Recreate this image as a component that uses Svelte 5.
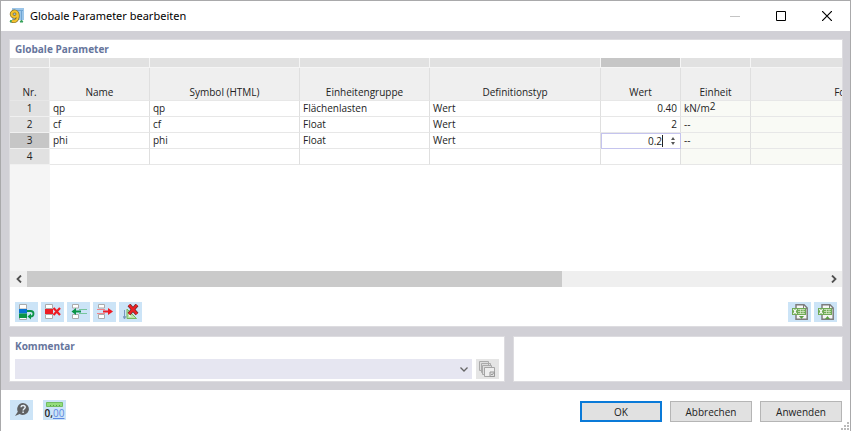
<script>
  const columns = [
    { label: 'Nr.', width: 40 },
    { label: 'Name', width: 100 },
    { label: 'Symbol (HTML)', width: 150 },
    { label: 'Einheitengruppe', width: 130 },
    { label: 'Definitionstyp', width: 171 },
    { label: 'Wert', width: 80, active: true },
    { label: 'Einheit', width: 70 },
    { label: 'Formel', width: 200 }
  ];

  const tableWidth = columns.reduce((sum, column) => sum + column.width, 0);

  const rows = [
    { nr: 1, name: 'qp', symbol: 'qp', group: 'Flächenlasten', type: 'Wert', value: '0.40', unit: 'kN/m', power: '2' },
    { nr: 2, name: 'cf', symbol: 'cf', group: 'Float', type: 'Wert', value: '2', unit: '--' },
    { nr: 3, name: 'phi', symbol: 'phi', group: 'Float', type: 'Wert', value: '0.2', unit: '--' },
    { nr: 4, name: '', symbol: '', group: '', type: '', value: '', unit: '' }
  ];

  let selectedRow = $state(3);
  let editValue = $state('0.2');

  function step(amount) {
    editValue = (parseFloat(editValue || '0') + amount).toFixed(1);
  }
</script>

<div class="window">
  <header class="titlebar">
    <svg class="app-icon" width="16" height="16" viewBox="0 0 16 16" aria-hidden="true">
      <path d="M3 0h12v12H3z" fill="#9cc6ea" />
      <path d="M4 2.500h10M12.500 3v9" stroke="#6fa5d3" fill="none" />
      <path d="M11 14l1.500-2 1.500 2zM1 14l1-2 1 2z" fill="#35a05a" stroke="#35a05a" />
      <path d="M8.500 6.500a3 2.700 0 1 1-.2-1.500c1 2.500.6 6-1.300 7.500-1.200.9-2.800.9-4 .2" fill="none" stroke="#7d6c2c" stroke-width="3.600" />
      <path d="M8.500 6.500a3 2.700 0 1 1-.2-1.500c1 2.500.6 6-1.300 7.500-1.200.9-2.800.9-4 .2" fill="none" stroke="#f4c22e" stroke-width="2.200" />
    </svg>
    <h1>Globale Parameter bearbeiten</h1>
    <div class="window-controls">
      <button type="button" aria-label="Minimieren" disabled>
        <svg width="10" height="10" viewBox="0 0 10 10"><path d="M0 5.500h10" stroke="#c4c4c4" /></svg>
      </button>
      <button type="button" aria-label="Maximieren">
        <svg width="10" height="10" viewBox="0 0 10 10"><path d="M.5.5h9v9h-9z" fill="none" stroke="#000" /></svg>
      </button>
      <button type="button" aria-label="Schließen">
        <svg width="10" height="10" viewBox="0 0 10 10"><path d="M0 0l10 10M10 0L0 10" stroke="#000" stroke-width="1.200" /></svg>
      </button>
    </div>
  </header>

  <main class="content">
    <section class="panel parameters">
      <h2>Globale Parameter</h2>

      <div class="grid">
        <table style:width="{tableWidth}px">
          <colgroup>
            {#each columns as column}
              <col style:width="{column.width}px" />
            {/each}
          </colgroup>
          <thead>
            <tr class="strip">
              {#each columns as column}
                <td class:active={column.active}></td>
              {/each}
            </tr>
            <tr class="labels">
              {#each columns as column}
                <th scope="col">{column.label}</th>
              {/each}
            </tr>
          </thead>
          <tbody>
            {#each rows as row (row.nr)}
              <tr class:selected={row.nr === selectedRow}>
                <th scope="row">{row.nr}</th>
                <td>{row.name}</td>
                <td>{row.symbol}</td>
                <td>{row.group}</td>
                <td>{row.type}</td>
                {#if row.nr === selectedRow}
                  <td class="editing">
                    <div class="editor">
                      <input type="text" aria-label="Wert" bind:value={editValue} />
                      <span class="caret"></span>
                      <span class="spinner">
                        <button type="button" aria-label="Erhöhen" onclick={() => step(0.1)}>
                          <svg width="4" height="3" viewBox="0 0 4 3"><path d="M0 3l2-3 2 3z" fill="#555" /></svg>
                        </button>
                        <button type="button" aria-label="Verringern" onclick={() => step(-0.1)}>
                          <svg width="4" height="3" viewBox="0 0 4 3"><path d="M0 0l2 3 2-3z" fill="#555" /></svg>
                        </button>
                      </span>
                    </div>
                  </td>
                {:else}
                  <td class="number">{row.value}</td>
                {/if}
                <td class="readonly">{row.unit}{#if row.power}<sup>{row.power}</sup>{/if}</td>
                <td class="readonly"></td>
              </tr>
            {/each}
          </tbody>
        </table>
        <div class="gutter"></div>
      </div>

      <div class="scrollbar">
        <button type="button" aria-label="Nach links">
          <svg width="6" height="8" viewBox="0 0 6 8"><path d="M5 .5L1.500 4 5 7.500" fill="none" stroke="#505050" stroke-width="1.800" /></svg>
        </button>
        <div class="track"><div class="thumb"></div></div>
        <button type="button" aria-label="Nach rechts">
          <svg width="6" height="8" viewBox="0 0 6 8"><path d="M1 .5L4.500 4 1 7.500" fill="none" stroke="#505050" stroke-width="1.800" /></svg>
        </button>
      </div>

      <div class="toolbar">
        <button class="tool" type="button" aria-label="Zeile kopieren">
          <svg width="16" height="16" viewBox="0 0 16 16">
            <path d="M.5.500h7V5h-7zM.5 11h7v4.500h-7z" fill="#fff" stroke="#aaa" />
            <path d="M0 5h8v4.500H0z" fill="#0873d2" />
            <path d="M0 9.500h8v4.500H0z" fill="#0c9447" />
            <path d="M8 7h3.500c4 0 4 5.500 0 5.500H10" fill="none" stroke="#0c9447" stroke-width="1.800" />
            <path d="M12 9.500v6l-3.500-3z" fill="#0c9447" />
          </svg>
        </button>
        <button class="tool" type="button" aria-label="Zeile löschen">
          <svg width="16" height="16" viewBox="0 0 16 16">
            <path d="M.5.500h7v4h-7zM.5 10.500h7v4h-7z" fill="#fff" stroke="#aaa" />
            <path d="M0 5h8v5H0z" fill="#ed1c24" />
            <path d="M8.500 4l6.500 7M15 4l-6.500 7" stroke="#ed1c24" stroke-width="2.200" />
          </svg>
        </button>
        <button class="tool" type="button" aria-label="Zeile einfügen">
          <svg width="16" height="16" viewBox="0 0 16 16">
            <path d="M1.500.500h6V4h-6zM1.500 10.500h6v4h-6z" fill="#fff" stroke="#aaa" />
            <path d="M8 5.500h8M8 9.500h8" stroke="#76c69d" />
            <path d="M2 7.500h8" stroke="#0c9447" stroke-width="2" />
            <path d="M5 4v7L.5 7.500z" fill="#0c9447" />
          </svg>
        </button>
        <button class="tool" type="button" aria-label="Zeile entfernen">
          <svg width="16" height="16" viewBox="0 0 16 16">
            <path d="M1.500.500h6V4h-6zM1.500 10.500h6v4h-6z" fill="#fff" stroke="#aaa" />
            <path d="M0 5.500h8M0 9.500h8" stroke="#f08388" />
            <path d="M6 7.500h8" stroke="#ed1c24" stroke-width="2" />
            <path d="M11 4v7l5-3.500z" fill="#ed1c24" />
          </svg>
        </button>
        <button class="tool" type="button" aria-label="Alle löschen">
          <svg width="16" height="16" viewBox="0 0 16 16">
            <path d="M1.500 6v8M0 12l1.500 3L3 12" fill="none" stroke="#7698bd" />
            <path d="M4 14.500V5l9.500 9.500z" fill="#b9e5a6" stroke="#75b65b" />
            <path d="M6 12.500v-2l2.500 2z" fill="#fff" />
            <path d="M6 1l8 9M14 1L6 10" stroke="#6d3030" stroke-width="3.800" />
            <path d="M6 1l8 9M14 1L6 10" stroke="#ed2024" stroke-width="2.400" />
          </svg>
        </button>
        <span class="spacer"></span>
        <button class="tool" type="button" aria-label="Excel-Export">
          <svg width="16" height="16" viewBox="0 0 16 16">
            <path d="M4 .8h8l3.200 3.200v11.200H4z" fill="#f6f6f6" stroke="#7d7d7d" stroke-width="1.500" />
            <path d="M11.500 1v3.500H15" fill="none" stroke="#7d7d7d" />
            <path d="M0 4h14v7H0z" fill="#6faa55" />
            <path d="M1.500 5l3 5M4.500 5l-3 5" stroke="#fff" stroke-width="1.200" />
            <path d="M6 5.500h7M6 7.500h7M6 9.500h7M8.500 5v5M11 5v5" stroke="#dceccf" stroke-width=".7" />
            <path d="M7 12h5l-2.500 3z" fill="#5b9d43" />
          </svg>
        </button>
        <button class="tool" type="button" aria-label="Excel-Import">
          <svg width="16" height="16" viewBox="0 0 16 16">
            <path d="M4 .8h8l3.200 3.200v11.200H4z" fill="#f6f6f6" stroke="#7d7d7d" stroke-width="1.500" />
            <path d="M11.500 1v3.500H15" fill="none" stroke="#7d7d7d" />
            <path d="M0 4h14v7H0z" fill="#6faa55" />
            <path d="M1.500 5l3 5M4.500 5l-3 5" stroke="#fff" stroke-width="1.200" />
            <path d="M6 5.500h7M6 7.500h7M6 9.500h7M8.500 5v5M11 5v5" stroke="#dceccf" stroke-width=".7" />
            <path d="M7 15h5l-2.500-3z" fill="#5b9d43" />
          </svg>
        </button>
      </div>
    </section>

    <div class="bottom">
      <section class="panel comment">
        <h2><label for="comment">Kommentar</label></h2>
        <div class="comment-row">
          <div class="select">
            <select id="comment"><option value=""></option></select>
            <svg width="8" height="5" viewBox="0 0 8 5" aria-hidden="true"><path d="M.5.500L4 4 7.500.500" fill="none" stroke="#666" stroke-width="1.300" /></svg>
          </div>
          <button class="tool disabled" type="button" aria-label="Kommentare" disabled>
            <svg width="16" height="16" viewBox="0 0 16 16">
              <path d="M.5.500h9v9h-9zM2.500 2.500h9v9h-9z" fill="#ddd" stroke="#aaa" />
              <path d="M3.500 4.500h9v9h-9z" fill="#ddd" stroke="#aaa" />
              <path d="M5.500 6.500h10v9h-10z" fill="#eee" stroke="#a5a5a5" />
              <path d="M11 11h4.500v4.500H11z" fill="#ddd" stroke="#999" />
              <path d="M12 13l1 1 2-2.500" fill="none" stroke="#999" />
            </svg>
          </button>
        </div>
      </section>
      <section class="panel preview"></section>
    </div>
  </main>

  <footer class="footer">
    <button class="tool" type="button" aria-label="Hilfe">
      <svg width="16" height="16" viewBox="0 0 16 16">
        <path d="M9 1a6 6 0 1 1-3.300 11.100L1 14l2.800-4.300A6 6 0 0 1 9 1z" fill="#5f6163" />
        <path d="M7 5.300c.2-2.300 4.200-2.200 4.200 0 0 1.500-2.100 1.500-2.100 3.300M9.100 9.600v1.500" fill="none" stroke="#e4eef6" stroke-width="1.500" />
      </svg>
    </button>
    <button class="tool decimals" type="button" aria-label="Einheiten und Dezimalstellen">
      <svg width="17" height="5" viewBox="0 0 17 5" aria-hidden="true">
        <path d="M.5.500h16v4H.5z" fill="#93dc7b" stroke="#72bd60" />
        <path d="M4.500 3v1M7.500 3v1M10.500 3v1M13.500 3v1" stroke="#559d49" />
      </svg>
      <span class="digits">0,<span class="fraction">00</span></span>
    </button>
    <div class="actions">
      <button class="primary" type="submit">OK</button>
      <button type="button">Abbrechen</button>
      <button type="button">Anwenden</button>
    </div>
    <svg class="grip" width="8" height="8" viewBox="0 0 8 8" aria-hidden="true">
      <path d="M6 0h2v2H6zM3 3h2v2H3zM6 3h2v2H6zM0 6h2v2H0zM3 6h2v2H3zM6 6h2v2H6z" fill="#bababa" />
    </svg>
  </footer>
</div>

<style>
  :global(body) {
    margin: 0;
  }

  .window {
    display: flex;
    flex-direction: column;
    box-sizing: border-box;
    min-height: 100vh;
    border: 1px solid #a9a9ab;
    border-width: 1px 1px 0 1px;
    background: #fff;
    color: #222;
    font: 10px/16px 'Open Sans', sans-serif;
  }

  button {
    padding: 0;
    border: 0;
    background: none;
    color: inherit;
    font: inherit;
  }

  svg {
    display: block;
  }

  .titlebar {
    display: flex;
    align-items: center;
    height: 30px;
    padding-left: 8px;
  }

  h1 {
    flex: 1;
    margin: 0 0 0 5px;
    color: #000;
    font: 400 11px/16px 'Noto Sans', sans-serif;
  }

  .window-controls {
    display: flex;
  }

  .window-controls button {
    display: grid;
    place-items: center;
    width: 46px;
    height: 28px;
  }

  .content {
    display: flex;
    flex: 1;
    flex-direction: column;
    gap: 9px;
    padding: 8px 7px 8px 8px;
    background: #d1d0d6;
  }

  .panel {
    border: 1px solid #dddce0;
    background: #fff;
  }

  h2 {
    margin: 0;
    padding: 1px 5px;
    color: #66759c;
    font-size: 10px;
    font-weight: 700;
  }

  .parameters {
    display: flex;
    flex: 1;
    flex-direction: column;
    min-width: 0;
  }

  .grid {
    display: flex;
    flex: 1;
    flex-direction: column;
    min-height: 180px;
    overflow: hidden;
  }

  .gutter {
    flex: 1;
    width: 40px;
    background: #f5f5f5;
  }

  table {
    table-layout: fixed;
    border-collapse: separate;
    border-spacing: 0;
  }

  th,
  td {
    box-sizing: border-box;
    height: 16px;
    padding: 0 3px;
    border-right: 1px solid #dfdfdf;
    border-bottom: 1px solid #e7e7e7;
    font-weight: 400;
    line-height: 14px;
    text-align: left;
    vertical-align: top;
    white-space: nowrap;
  }

  .strip td {
    height: 10px;
    border-right-color: #f5f5f5;
    border-bottom-color: #f5f5f5;
    background: #e1e1e1;
    line-height: 9px;
  }

  .strip td.active {
    background: #c6c6c6;
  }

  .labels th {
    height: 33px;
    padding-bottom: 1px;
    background: #efefef;
    text-align: center;
    vertical-align: bottom;
  }

  .labels th:first-child,
  tbody th {
    border-right-color: #eee;
    background: #e1e1e1;
    text-align: center;
  }

  tbody th {
    border-bottom-color: #f0f0f0;
  }

  .selected th {
    background: #c6c6c6;
  }

  .readonly {
    background: #f9faf5;
  }

  .number {
    text-align: right;
  }

  sup {
    font-size: 10px;
    line-height: 0;
    vertical-align: 2px;
  }

  .editing {
    padding: 0;
    border: 1px solid #c5c4ee;
  }

  .editor {
    display: flex;
    align-items: center;
    height: 14px;
  }

  .editor input {
    flex: 1;
    min-width: 0;
    height: 14px;
    padding: 0;
    border: 0;
    outline: 0;
    background: none;
    color: inherit;
    font: inherit;
    text-align: right;
  }

  .caret {
    width: 1px;
    height: 12px;
    background: #222;
  }

  .spinner {
    display: flex;
    flex-direction: column;
    gap: 2px;
    margin: 0 5px 0 8px;
  }

  .spinner button {
    height: 3px;
  }

  .scrollbar {
    display: flex;
    height: 16px;
    background: #efefef;
  }

  .scrollbar button {
    display: grid;
    place-items: center;
    width: 17px;
  }

  .track {
    flex: 1;
  }

  .thumb {
    width: 67%;
    height: 100%;
    background: #cacaca;
  }

  .toolbar {
    display: flex;
    gap: 3px;
    padding: 15px 5px 4px;
  }

  .spacer {
    flex: 1;
  }

  .tool {
    display: grid;
    place-items: center;
    width: 23px;
    height: 20px;
    background: #cce4f7;
  }

  .tool.disabled {
    background: #e5e5e5;
  }

  .bottom {
    display: grid;
    grid-template-columns: 3fr 2fr;
    gap: 8px;
  }

  .comment-row {
    display: flex;
    gap: 4px;
    padding: 4px 5px 2px;
  }

  .select {
    position: relative;
    flex: 1;
  }

  .select select {
    display: block;
    width: 100%;
    height: 20px;
    border: 0;
    border-radius: 0;
    appearance: none;
    background: #e6e6f1;
    font: inherit;
  }

  .select svg {
    position: absolute;
    top: 8px;
    right: 4px;
    pointer-events: none;
  }

  .footer {
    position: relative;
    display: flex;
    gap: 10px;
    height: 31px;
    padding: 10px 8px 0 9px;
  }

  .decimals {
    display: flex;
    flex-direction: column;
    align-items: center;
    justify-content: center;
    gap: 1px;
  }

  .digits {
    font-size: 10px;
    font-weight: 600;
    line-height: 11px;
  }

  .fraction {
    color: #5d87e0;
    font-weight: 400;
    text-decoration: underline;
  }

  .actions {
    display: flex;
    gap: 8px;
    margin: 1px 0 0 auto;
  }

  .actions button {
    width: 82px;
    height: 21px;
    border: 1px solid #b5b5b5;
    background: #e1e1e1;
  }

  .actions .primary {
    border: 2px solid #0a7ad8;
  }

  .grip {
    position: absolute;
    right: 1px;
    bottom: 1px;
  }
</style>
